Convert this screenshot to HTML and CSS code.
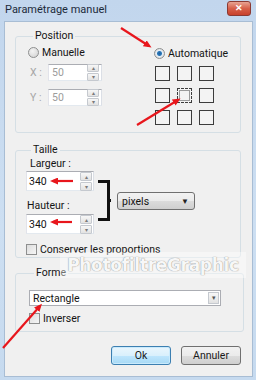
FILE: index.html
```html
<!DOCTYPE html>
<html lang="fr">
<head>
  <meta charset="UTF-8">
  <title>Paramétrage manuel</title>
  <link rel="stylesheet" href="styles.css">
</head>
<body>
  <div class="window">
    <div class="titlebar">
      <span class="title">Paramétrage manuel</span>
      <span class="close">✕</span>
    </div>

    <div class="client">
      <fieldset class="group group-position">
        <legend>Position</legend>
        <div class="pos-cols">
          <div class="pos-left">
            <label class="radio-row"><span class="radio"></span>Manuelle</label>
            <div class="coord-row">
              <span class="coord-label">X :</span>
              <div class="spin small disabled"><span class="value">50</span><span class="spin-btns"><i>▴</i><i>▾</i></span></div>
            </div>
            <div class="coord-row">
              <span class="coord-label">Y :</span>
              <div class="spin small disabled"><span class="value">50</span><span class="spin-btns"><i>▴</i><i>▾</i></span></div>
            </div>
          </div>
          <div class="pos-right">
            <label class="radio-row"><span class="radio checked"></span>Automatique</label>
            <div class="anchor-grid">
              <span></span><span></span><span></span>
              <span></span><span class="focus"></span><span></span>
              <span></span><span></span><span></span>
            </div>
          </div>
        </div>
      </fieldset>

      <fieldset class="group group-size">
        <legend>Taille</legend>
        <div class="size-row">
          <div class="size-fields">
            <div class="field-label">Largeur :</div>
            <div class="spin big"><span class="value">340</span><span class="spin-btns"><i>▴</i><i>▾</i></span></div>
            <div class="field-label second">Hauteur :</div>
            <div class="spin big"><span class="value">340</span><span class="spin-btns"><i>▴</i><i>▾</i></span></div>
          </div>
          <div class="bracket"><span class="tick"></span></div>
          <div class="unit-select">pixels<span class="caret">▼</span></div>
        </div>
        <label class="check-row keep"><span class="checkbox"></span>Conserver les proportions</label>
      </fieldset>

      <fieldset class="group group-shape">
        <legend>Forme</legend>
        <div class="combo">Rectangle<span class="combo-btn">▾</span></div>
        <label class="check-row inv"><span class="checkbox"></span>Inverser</label>
      </fieldset>

      <div class="buttons">
        <button class="btn default">Ok</button>
        <button class="btn">Annuler</button>
      </div>
    </div>

    <div class="watermark">PhotofiltreGraphic</div>

    <svg class="arrows" width="256" height="380" viewBox="0 0 256 380">
      <defs>
        <marker id="head" markerWidth="8" markerHeight="7" refX="5" refY="3.5" orient="auto" markerUnits="userSpaceOnUse">
          <path d="M0,0 L8,3.5 L0,7 z" fill="#e8161c"/>
        </marker>
      </defs>
      <g stroke="#e8161c" stroke-width="2.2" fill="none">
        <line x1="121" y1="28" x2="149" y2="46" marker-end="url(#head)"/>
        <line x1="137" y1="125" x2="178" y2="100" marker-end="url(#head)"/>
        <line x1="73" y1="181" x2="53" y2="181" marker-end="url(#head)"/>
        <line x1="72" y1="222" x2="53" y2="222" marker-end="url(#head)"/>
        <line x1="3" y1="348" x2="40" y2="306" marker-end="url(#head)"/>
      </g>
    </svg>
  </div>
</body>
</html>
```

FILE: styles.css
```css
body {
  margin: 0;
  padding: 0;
  font-family: Roboto, "Noto Sans", sans-serif;
  font-size: 10.5px;
  color: #141414;
}

.window {
  position: relative;
  width: 256px;
  height: 380px;
  background: linear-gradient(#c2d6ed, #cddff2 60%, #c6daef);
  display: flex;
  flex-direction: column;
  overflow: hidden;
}

.titlebar {
  height: 21px;
  display: flex;
  align-items: center;
  justify-content: space-between;
  padding: 0 5px 0 5px;
  flex-shrink: 0;
}

.title {
  font-size: 11px;
  color: #1c2a3a;
  margin-top: -2px;
}

.close {
  width: 22px;
  height: 13px;
  margin-top: -4px;
  border-radius: 3px;
  border: 1px solid #8b3a33;
  background: linear-gradient(#e8a493, #d7604a 50%, #c8412c);
  color: #fff;
  font-size: 9px;
  font-weight: bold;
  line-height: 13px;
  text-align: center;
}

.client {
  flex: 1;
  margin: 0 3px 3px 4px;
  background: #f0f0f0;
  border: 1px solid #a8bdd4;
  padding: 7px 0 0 10px;
  display: flex;
  flex-direction: column;
}

.group {
  margin: 0;
  width: 226px;
  box-sizing: border-box;
  border: 1px solid #d5dfe5;
  border-radius: 3px;
  padding: 0 0 0 12px;
}

.group legend {
  padding: 0 2px;
  margin-left: 5px;
  line-height: 14px;
}

/* Position */
.group-position {
  height: 104px;
}

.pos-cols {
  display: flex;
}

.pos-left {
  width: 126px;
  padding-top: 2px;
}

.pos-right {
  padding-top: 3px;
}

.radio-row {
  display: flex;
  align-items: center;
  gap: 3px;
  height: 14px;
}

.radio {
  width: 11px;
  height: 11px;
  box-sizing: border-box;
  border-radius: 50%;
  border: 1px solid #8e8f8f;
  background: radial-gradient(circle at 40% 35%, #f4f4f4, #cfcfcf);
}

.radio.checked {
  background: radial-gradient(circle, #1f5fa0 0, #2a78b8 2px, #e6eef6 3px, #dcdcdc 5px);
}

.coord-row {
  display: flex;
  align-items: center;
  margin-top: 5px;
}

.coord-row + .coord-row {
  margin-top: 8px;
}

.coord-label {
  width: 18px;
  padding-left: 2px;
  color: #a6a6a6;
}

.spin {
  display: flex;
  align-items: center;
  justify-content: space-between;
  box-sizing: border-box;
  background: #fff;
  border: 1px solid #abadb3;
  border-color: #abadb3 #dbdfe6 #e3e9ef #e2e3ea;
}

.spin.small {
  width: 54px;
  height: 17px;
  padding: 0 2px 0 3px;
}

.spin.big {
  width: 68px;
  height: 20px;
  padding: 0 1px 0 2px;
}

.spin.disabled .value {
  color: #9c9c9c;
}

.spin-btns {
  display: flex;
  flex-direction: column;
  gap: 1px;
}

.spin-btns i {
  display: block;
  width: 10px;
  height: 6px;
  border: 1px solid #c5c9cf;
  border-radius: 1px;
  background: linear-gradient(#f7f7f7, #e2e2e2);
  font-style: normal;
  font-size: 6px;
  line-height: 6px;
  text-align: center;
  color: #7a7a7a;
}

.spin.big .spin-btns i {
  height: 7px;
  line-height: 7px;
}

.anchor-grid {
  display: grid;
  grid-template-columns: repeat(3, 15px);
  grid-auto-rows: 15px;
  gap: 7px;
  margin-top: 6px;
  margin-left: 1px;
}

.anchor-grid span {
  box-sizing: border-box;
  border: 1px solid #3c3c3c;
  background: #f3f3f3;
}

.anchor-grid span.focus {
  border: 1px dashed #3c3c3c;
  box-shadow: inset 0 0 0 1px #f3f3f3, inset 0 0 0 2px #9a9a9a;
}

/* Taille */
.group-size {
  margin-top: 10px;
  height: 115px;
  padding-left: 10px;
}

.size-row {
  display: flex;
}

.size-fields {
  width: 68px;
}

.field-label {
  height: 14px;
  line-height: 14px;
  padding-left: 4px;
}

.field-label.second {
  margin-top: 8px;
  margin-bottom: 1px;
  padding-left: 1px;
}

.bracket {
  position: relative;
  margin: 23px 0 0 4px;
  width: 9px;
  height: 35px;
  border: 3px solid #111;
  border-left: none;
}

.bracket .tick {
  position: absolute;
  left: 9px;
  top: 16px;
  width: 4px;
  height: 3px;
  background: #111;
}

.unit-select {
  margin: 35px 0 0 7px;
  width: 78px;
  height: 18px;
  box-sizing: border-box;
  border: 1px solid #707070;
  border-radius: 3px;
  background: linear-gradient(#f2f2f2, #ebebeb 50%, #dcdcdc 51%, #cfcfcf);
  display: flex;
  align-items: center;
  justify-content: space-between;
  padding: 0 5px 0 4px;
}

.caret {
  font-size: 8px;
  color: #222;
}

.check-row {
  display: flex;
  align-items: center;
  gap: 3px;
  height: 13px;
}

.check-row.keep {
  margin-top: 9px;
}

.checkbox {
  width: 11px;
  height: 11px;
  box-sizing: border-box;
  border: 1px solid #8e8f8f;
  background: linear-gradient(135deg, #dcdcdc, #f6f6f6);
}

/* Forme */
.group-shape {
  margin-top: 8px;
  height: 66px;
  width: 229px;
  padding-left: 13px;
}

.combo {
  margin-top: 10px;
  width: 192px;
  height: 16px;
  box-sizing: border-box;
  border: 1px solid #abadb3;
  background: #fff;
  display: flex;
  align-items: center;
  justify-content: space-between;
  padding: 0 1px 0 3px;
}

.combo-btn {
  width: 11px;
  height: 12px;
  box-sizing: border-box;
  border: 1px solid #c5c9cf;
  background: linear-gradient(#f7f7f7, #e2e2e2);
  font-size: 7px;
  line-height: 10px;
  text-align: center;
  color: #555;
}

.check-row.inv {
  margin-top: 6px;
}

/* Buttons */
.buttons {
  display: flex;
  justify-content: flex-end;
  gap: 10px;
  margin: 14px 11px 0 0;
}

.btn {
  width: 60px;
  height: 19px;
  border: 1px solid #707070;
  border-radius: 3px;
  background: linear-gradient(#f2f2f2, #ebebeb 50%, #dddddd 51%, #cfcfcf);
  font-family: inherit;
  font-size: 10.5px;
  color: #1a1a1a;
  padding: 0;
}

.btn.default {
  border-color: #3c7fb1;
  background: linear-gradient(#eaf6fd, #d9f0fc 50%, #bee6fd 51%, #a7d9f5);
  box-shadow: inset 0 0 0 1px #c9eafc;
}

/* overlays */
.watermark {
  position: absolute;
  left: 60px;
  top: 252px;
  width: 186px;
  height: 26px;
  background: rgba(255, 255, 255, 0.4);
  color: rgba(255, 255, 255, 0.95);
  font-family: "DejaVu Sans", sans-serif;
  font-weight: bold;
  font-size: 17px;
  line-height: 26px;
  text-align: center;
  letter-spacing: -0.3px;
  text-shadow: 0 0 1px rgba(110, 110, 110, 0.7), 0 0 1px rgba(110, 110, 110, 0.5);
}

.arrows {
  position: absolute;
  left: 0;
  top: 0;
  pointer-events: none;
}
```
